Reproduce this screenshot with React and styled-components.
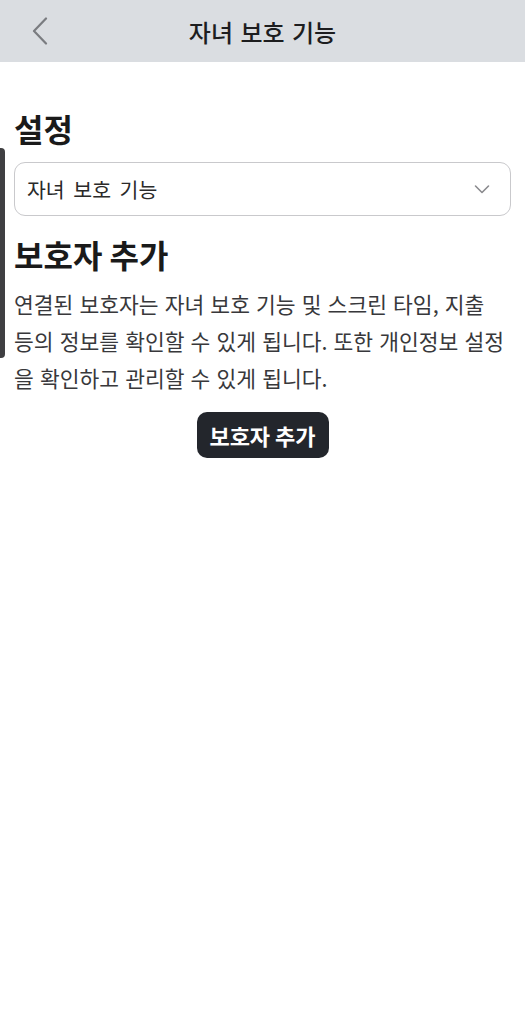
import React from "react";
import styled, { createGlobalStyle } from "styled-components";

const GlobalStyle = createGlobalStyle`
  html, body {
    margin: 0;
    padding: 0;
    background: #ffffff;
  }
  body {
    font-family: "Noto Sans CJK KR", "Noto Sans", sans-serif;
    color: #1d1d1f;
  }
`;

const Page = styled.div`
  position: relative;
  width: 525px;
  min-height: 1024px;
  background: #ffffff;
`;

const Header = styled.header`
  height: 62px;
  background: #dadde1;
  display: grid;
  grid-template-columns: 62px 1fr 62px;
  align-items: center;
`;

const BackButton = styled.button`
  border: none;
  background: none;
  padding: 0 0 0 32px;
  height: 100%;
  display: flex;
  align-items: center;
  cursor: pointer;
`;

const Title = styled.h1`
  margin: 0;
  text-align: center;
  font-size: 24px;
  font-weight: 500;
  color: #1d1d1f;
  word-spacing: 2px;
`;

const Content = styled.main`
  padding: 44px 14px 0 14px;
  display: flex;
  flex-direction: column;
`;

const SectionTitle = styled.h2`
  margin: ${(p) => (p.$gap ? "16px 0 0" : "0")};
  font-size: 32px;
  font-weight: 700;
  line-height: 1.4;
  color: #1a1a1a;
`;

const SelectBox = styled.div`
  margin-top: 11px;
  height: 54px;
  border: 1px solid #c9c9cc;
  border-radius: 11px;
  display: flex;
  align-items: center;
  justify-content: space-between;
  padding: 0 20px 0 12px;
  font-size: 20.5px;
  color: #2a2a2a;
  word-spacing: 4px;
  box-sizing: border-box;
`;

const Description = styled.p`
  margin: 8px 0 0;
  font-size: 21.5px;
  line-height: 37px;
  color: #38383b;
  word-spacing: 1.3px;
  white-space: nowrap;
`;

const ButtonRow = styled.div`
  display: flex;
  justify-content: center;
  margin-top: 16px;
`;

const PrimaryButton = styled.button`
  background: #23262c;
  color: #ffffff;
  border: none;
  border-radius: 10px;
  width: 132px;
  height: 46px;
  padding: 0;
  font-family: inherit;
  font-size: 22px;
  font-weight: 700;
  cursor: pointer;
`;

const SideHandle = styled.div`
  position: absolute;
  left: 0;
  top: 148px;
  width: 5px;
  height: 210px;
  background: #3f3f42;
  border-radius: 0 4px 4px 0;
`;

function ChevronLeft() {
  return (
    <svg width="16" height="28" viewBox="0 0 16 28" fill="none">
      <path
        d="M14 1.5L2 14l12 12.5"
        stroke="#7a7c80"
        strokeWidth="2.2"
        strokeLinecap="round"
        strokeLinejoin="round"
      />
    </svg>
  );
}

function ChevronDown() {
  return (
    <svg width="16" height="10" viewBox="0 0 16 10" fill="none">
      <path
        d="M1.5 2l6.5 6.5L14.5 2"
        stroke="#8a8a8e"
        strokeWidth="1.6"
        strokeLinecap="round"
        strokeLinejoin="round"
      />
    </svg>
  );
}

export default function App() {
  return (
    <Page>
      <GlobalStyle />
      <Header>
        <BackButton aria-label="뒤로">
          <ChevronLeft />
        </BackButton>
        <Title>자녀 보호 기능</Title>
        <span />
      </Header>
      <Content>
        <SectionTitle>설정</SectionTitle>
        <SelectBox>
          <span>자녀 보호 기능</span>
          <ChevronDown />
        </SelectBox>
        <SectionTitle $gap>보호자 추가</SectionTitle>
        <Description>
          연결된 보호자는 자녀 보호 기능 및 스크린 타임, 지출
          <br />
          등의 정보를 확인할 수 있게 됩니다. 또한 개인정보 설정
          <br />을 확인하고 관리할 수 있게 됩니다.
        </Description>
        <ButtonRow>
          <PrimaryButton>보호자 추가</PrimaryButton>
        </ButtonRow>
      </Content>
      <SideHandle />
    </Page>
  );
}
